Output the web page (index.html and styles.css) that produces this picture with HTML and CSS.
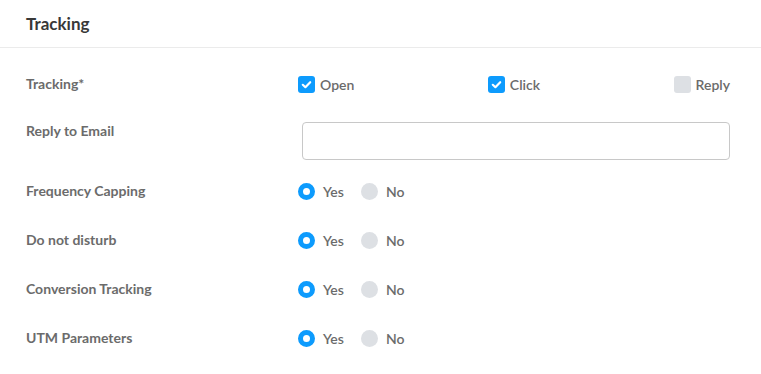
FILE: index.html
```html
<!DOCTYPE html>
<html>
<head>
  <meta charset="UTF-8">
  <title>Tracking</title>
  <link rel="stylesheet" href="styles.css">
</head>
<body>
  <div class="panel">
    <div class="panel-header">
      <h2>Tracking</h2>
    </div>

    <form class="panel-body">
      <!-- Tracking checkboxes -->
      <div class="field field-checks">
        <label class="field-label">Tracking*</label>
        <div class="check-group">
          <label class="check">
            <span class="box checked">
              <svg width="17" height="17" viewBox="0 0 17 17"><path d="M4.8 8.8l2.6 2.4 4.8-5" fill="none" stroke="#fff" stroke-width="2.2" stroke-linecap="round" stroke-linejoin="round"/></svg>
            </span>
            Open
          </label>
          <label class="check">
            <span class="box checked">
              <svg width="17" height="17" viewBox="0 0 17 17"><path d="M4.8 8.8l2.6 2.4 4.8-5" fill="none" stroke="#fff" stroke-width="2.2" stroke-linecap="round" stroke-linejoin="round"/></svg>
            </span>
            Click
          </label>
          <label class="check">
            <span class="box"></span>
            Reply
          </label>
        </div>
      </div>

      <!-- Reply address -->
      <div class="field field-input">
        <label class="field-label" for="replyEmail">Reply to Email</label>
        <input type="text" id="replyEmail" class="text-input">
      </div>

      <div class="field">
        <label class="field-label">Frequency Capping</label>
        <div class="radio-group">
          <label class="radio"><span class="dot on"></span>Yes</label>
          <label class="radio"><span class="dot"></span>No</label>
        </div>
      </div>

      <div class="field">
        <label class="field-label">Do not disturb</label>
        <div class="radio-group">
          <label class="radio"><span class="dot on"></span>Yes</label>
          <label class="radio"><span class="dot"></span>No</label>
        </div>
      </div>

      <div class="field">
        <label class="field-label">Conversion Tracking</label>
        <div class="radio-group">
          <label class="radio"><span class="dot on"></span>Yes</label>
          <label class="radio"><span class="dot"></span>No</label>
        </div>
      </div>

      <div class="field">
        <label class="field-label">UTM Parameters</label>
        <div class="radio-group">
          <label class="radio"><span class="dot on"></span>Yes</label>
          <label class="radio"><span class="dot"></span>No</label>
        </div>
      </div>
    </form>
  </div>
</body>
</html>
```

FILE: styles.css
```css
/* Reset */
body, html {
  margin: 0;
  padding: 0;
  font-family: Lato, "Open Sans", sans-serif;
  background-color: #fff;
}

/* Header */
.panel-header {
  height: 47px;
  display: flex;
  align-items: center;
  padding: 0 26px;
  border-bottom: 1px solid #ebebeb;
}

.panel-header h2 {
  margin: 0;
  font-size: 17px;
  font-weight: 700;
  color: #383838;
}

/* Body */
.panel-body {
  padding: 28px 31px 0 26px;
}

.field {
  display: grid;
  grid-template-columns: 272px 1fr;
  align-items: start;
  margin-bottom: 32px;
}

.field-checks {
  margin-bottom: 29px;
}

.field-input {
  margin-bottom: 23px;
}

.field-label {
  font-size: 14px;
  font-weight: 700;
  line-height: 16px;
  color: #6b6b6b;
}

.field-input .field-label {
  line-height: 18px;
}

/* Checkboxes */
.check-group {
  display: flex;
  justify-content: space-between;
}

.check, .radio {
  display: flex;
  align-items: center;
  font-size: 14px;
  font-weight: 600;
  line-height: 17px;
  color: #6b6b6b;
}

.box {
  width: 17px;
  height: 17px;
  border-radius: 3px;
  background: #dde0e4;
  margin-right: 5px;
  display: flex;
}

.box.checked {
  background: #0d9bfd;
}

/* Input */
.text-input {
  margin-left: 4px;
  height: 38px;
  box-sizing: border-box;
  border: 1px solid #c8c8c8;
  border-radius: 4px;
  padding: 0 10px;
  font-family: inherit;
  font-size: 14px;
  outline: none;
}

/* Radios */
.radio-group {
  display: flex;
}

.radio {
  margin-right: 17px;
}

.dot {
  width: 17px;
  height: 17px;
  box-sizing: border-box;
  border-radius: 50%;
  background: #dde0e4;
  margin-right: 8px;
}

.dot.on {
  background: #fff;
  border: 5px solid #0d9bfd;
}
```
